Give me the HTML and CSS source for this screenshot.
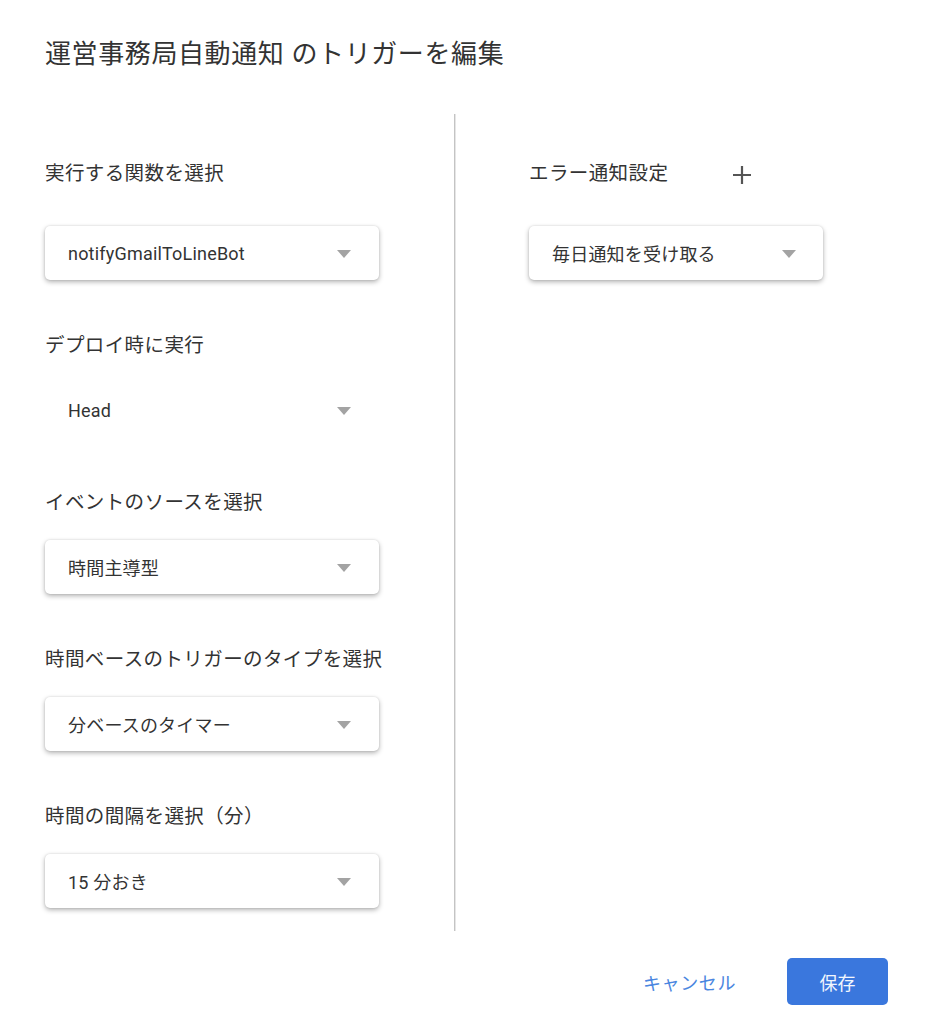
FILE: index.html
```html
<!DOCTYPE html>
<html lang="ja">
<head>
<meta charset="utf-8">
<title>トリガーを編集</title>
<link rel="stylesheet" href="styles.css">
</head>
<body>
<div class="dialog">
  <h1 class="title">運営事務局自動通知 のトリガーを編集</h1>
  <div class="content">
    <div class="col col-left">
      <div class="group first">
        <div class="label">実行する関数を選択</div>
        <div class="select"><span class="value">notifyGmailToLineBot</span><span class="arrow"></span></div>
      </div>
      <div class="group">
        <div class="label">デプロイ時に実行</div>
        <div class="select flat"><span class="value">Head</span><span class="arrow"></span></div>
      </div>
      <div class="group">
        <div class="label">イベントのソースを選択</div>
        <div class="select"><span class="value">時間主導型</span><span class="arrow"></span></div>
      </div>
      <div class="group">
        <div class="label">時間ベースのトリガーのタイプを選択</div>
        <div class="select"><span class="value">分ベースのタイマー</span><span class="arrow"></span></div>
      </div>
      <div class="group">
        <div class="label">時間の間隔を選択（分）</div>
        <div class="select"><span class="value">15 分おき</span><span class="arrow"></span></div>
      </div>
    </div>
    <div class="divider"></div>
    <div class="col col-right">
      <div class="group first">
        <div class="label label-row">エラー通知設定
          <svg class="plus" width="20" height="20" viewBox="0 0 20 20" aria-hidden="true"><path d="M10 1v18M1 10h18" stroke="#555" stroke-width="2.2" fill="none"/></svg>
        </div>
        <div class="select narrow"><span class="value">毎日通知を受け取る</span><span class="arrow"></span></div>
      </div>
    </div>
  </div>
  <div class="footer">
    <button class="btn btn-cancel">キャンセル</button>
    <button class="btn btn-save">保存</button>
  </div>
</div>
</body>
</html>
```

FILE: styles.css
```css
html, body {
  margin: 0;
  padding: 0;
  background: #fff;
}
body {
  font-family: Roboto, "Noto Sans CJK JP", sans-serif;
  color: #333;
}
.dialog {
  width: 932px;
  height: 1024px;
  overflow: hidden;
}
.title {
  margin: 0;
  padding: 37px 0 0 45px;
  font-size: 26px;
  font-weight: 400;
  line-height: 34px;
  color: #333;
  letter-spacing: 0.6px;
}
.content {
  display: flex;
  margin-top: 43px;
  height: 817px;
}
.col-left {
  width: 334px;
  padding-left: 45px;
  padding-right: 75px;
}
.divider {
  width: 1px;
  background: #c4c4c4;
  border-right: 1px solid #e6e6e6;
}
.col-right {
  padding-left: 73px;
}
.group {
  margin-bottom: 54px;
}
.group.first {
  padding-top: 48px;
}
.label {
  font-size: 19.5px;
  line-height: 24px;
  height: 24px;
  margin-bottom: 25px;
  color: #333;
  letter-spacing: 0.4px;
  white-space: nowrap;
}
.group.first .label {
  margin-bottom: 40px;
}
.label-row {
  display: flex;
  align-items: center;
}
.plus {
  margin-left: 64px;
  margin-top: 2px;
}
.select {
  display: flex;
  align-items: center;
  justify-content: space-between;
  box-sizing: border-box;
  width: 334px;
  height: 54px;
  padding: 0 28px 0 23px;
  border-radius: 5px;
  background: #fff;
  box-shadow: 0 2px 5px rgba(0, 0, 0, 0.3), 0 0 2px rgba(0, 0, 0, 0.12);
}
.select.flat {
  box-shadow: none;
}
.select.narrow {
  width: 294px;
  padding-right: 27px;
}
.value {
  font-size: 18px;
  color: #333;
  letter-spacing: 0.2px;
  white-space: nowrap;
}
.arrow {
  width: 0;
  height: 0;
  border-left: 7px solid transparent;
  border-right: 7px solid transparent;
  border-top: 8px solid #a3a3a3;
  margin-top: 2px;
}
.footer {
  display: flex;
  justify-content: flex-end;
  align-items: center;
  padding: 27px 44px 0 0;
}
.btn {
  font-family: "Noto Sans CJK JP", Roboto, sans-serif;
  font-size: 18px;
  border: none;
  background: none;
  cursor: pointer;
  height: 47px;
  white-space: nowrap;
}
.btn-cancel {
  color: #4a86e0;
  padding: 0 15px;
  margin-right: 36px;
  letter-spacing: 0.6px;
}
.btn-save {
  width: 101px;
  background: #3a77dd;
  color: #f2f6fd;
  border-radius: 5px;
}
```
